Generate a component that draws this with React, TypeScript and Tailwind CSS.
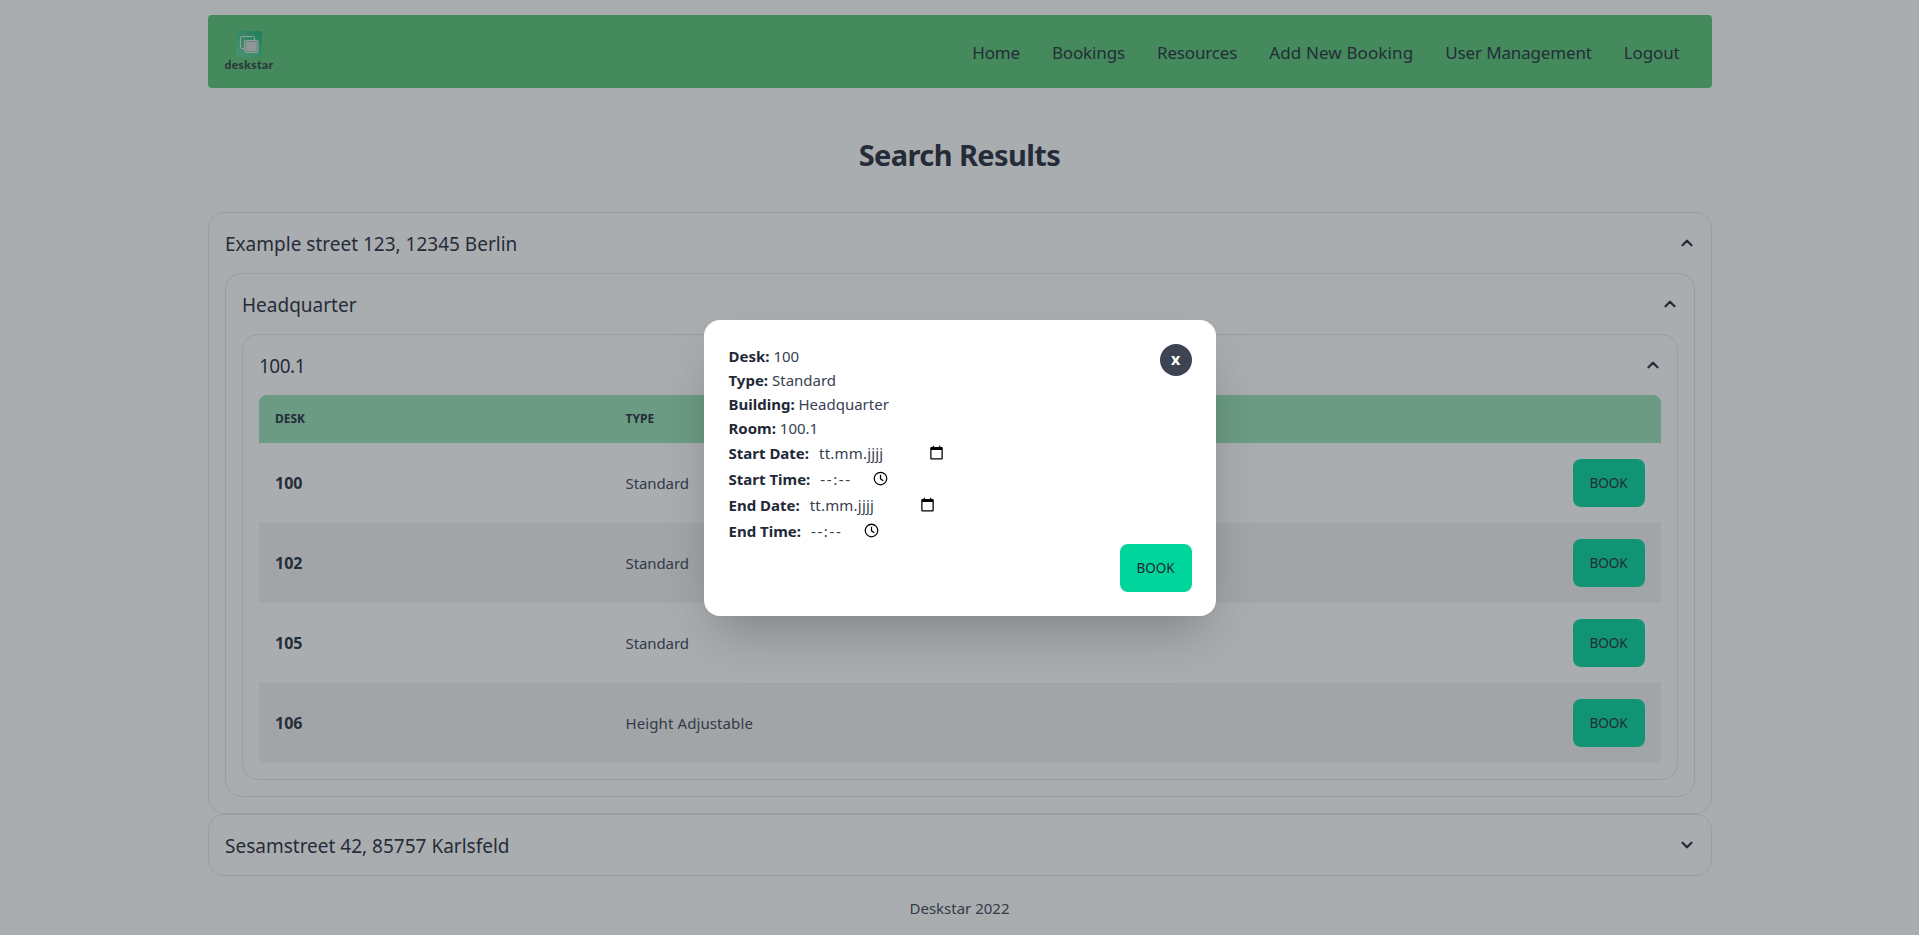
import { ChevronDown, ChevronUp } from "lucide-react";

const desks = [
  { id: "100", type: "Standard" },
  { id: "102", type: "Standard" },
  { id: "105", type: "Standard" },
  { id: "106", type: "Height Adjustable" },
];

const navItems = ["Home", "Bookings", "Resources", "Add New Booking", "User Management", "Logout"];

const CalendarIcon = () => (
  <svg viewBox="0 0 24 24" className="h-[15px] w-[15px] fill-black">
    <path d="M20 3h-2V1h-2v2H8V1H6v2H4c-1.1 0-2 .9-2 2v16c0 1.1.9 2 2 2h16c1.100 0 2-.9 2-2V5c0-1.100-.9-2-2-2zm0 18H4V8h16v13z" />
  </svg>
);

const ClockIcon = () => (
  <svg viewBox="0 0 24 24" className="h-[15px] w-[15px]" fill="none" stroke="black">
    <circle cx="12" cy="12" r="10" strokeWidth="2" />
    <path d="M12 6v6.500l4.500 3" strokeWidth="2" />
  </svg>
);

const Logo = () => (
  <div className="ml-[17px] flex flex-col items-center">
    <div className="flex h-[26px] w-[26px] items-center justify-center rounded-[3px] bg-gradient-to-tr from-[#5fd69a] to-[#12b070]">
      <svg viewBox="0 0 26 26" className="h-[26px] w-[26px]" fill="none" stroke="#d8e8e0" strokeWidth="1">
        <rect x="4.500" y="5.500" width="14" height="12" rx="1" />
        <rect x="8.500" y="9.500" width="13.500" height="12" rx="1" fill="#8fc4a6" />
        <rect x="10" y="11" width="10.500" height="9" fill="#d0dcd6" stroke="none" />
      </svg>
    </div>
    <span className="mt-[1px] font-['Lato'] text-[12px] leading-[14px] font-black tracking-[0.4px] text-[#2a3a38]">deskstar</span>
  </div>
);

const SectionHeader = ({ title, open, tight }: { title: string; open: boolean; tight?: boolean }) => (
  <div className={`flex h-[60px] items-center justify-between pr-[15px] pl-[16.5px] pb-[1px] text-[19px] text-[#1f2937] ${tight ? "tracking-[-0.5px]" : "tracking-normal"}`}>
    <span className="pt-[3px]">{title}</span>
    {open ? <ChevronUp size={18} strokeWidth={3} /> : <ChevronDown size={18} strokeWidth={3} />}
  </div>
);

const DeskTable = () => (
  <table className="w-full border-separate border-spacing-0 text-left">
    <thead>
      <tr className="h-[48px] bg-[#96e1b2] text-[12px] font-bold text-[#1f2937]">
        <th className="w-[367px] rounded-tl-lg pl-[16.5px] font-bold">DESK</th>
        <th className="font-bold">TYPE</th>
        <th className="rounded-tr-lg" />
      </tr>
    </thead>
    <tbody>
      {desks.map((desk, i) => {
        const bg = i % 2 === 1 ? "bg-[#f2f2f2]" : "bg-white";
        return (
          <tr key={desk.id} className="h-[80px] text-[#1f2937]">
            <td className={`${bg} pl-[16.5px] text-[16px] font-bold ${i === 3 ? "rounded-bl-lg" : ""}`}>{desk.id}</td>
            <td className={`${bg} text-[#374151] ${i === 3 ? "tracking-[0.1px]" : "tracking-[-0.1px]"}`}>{desk.type}</td>
            <td className={`${bg} pr-[16px] text-right ${i === 3 ? "rounded-br-lg" : ""}`}>
              <button className="h-[48px] w-[72px] rounded-lg bg-[#00d59b] text-[13.5px] text-[#1f2937]">BOOK</button>
            </td>
          </tr>
        );
      })}
    </tbody>
  </table>
);

const Field = ({ label, placeholder, kind, width }: { label: string; placeholder: string; kind: "date" | "time"; width: string }) => (
  <div className="flex h-[26px] items-center pl-[1px]">
    <b className="mr-[10px] pt-[1px] font-bold text-[#1f2937]">{label}</b>
    <span className={`${width} pt-[1px] text-[#374151] ${kind === "time" ? "tracking-[1.6px]" : "tracking-[0.2px]"}`}>{placeholder}</span>
    {kind === "date" ? <CalendarIcon /> : <ClockIcon />}
  </div>
);

export default function App() {
  return (
    <div className="relative min-h-[935px] bg-white font-['Noto_Sans',sans-serif] text-[15px] text-[#1f2937]">
      <div className="mx-auto w-[1504px] pt-[15px]">
        <nav className="flex h-[73px] items-center justify-between rounded bg-[#55c573]">
          <Logo />
          <ul className="flex gap-[32px] pt-[2px] pr-[32px] text-[17px] tracking-[-0.15px] text-[#1f2937]">
            {navItems.map((item) => (
              <li key={item} className={item === "Add New Booking" ? "tracking-[0.12px]" : ""}>{item}</li>
            ))}
          </ul>
        </nav>

        <h1 className="mt-[49px] mb-[39px] text-center text-[29px] leading-[36px] font-bold tracking-[-0.6px] text-[#1f2937]">
          Search Results
        </h1>

        <div className="rounded-2xl border border-[#e5e7eb]">
          <SectionHeader title="Example street 123, 12345 Berlin" open />
          <div className="px-[16px] pb-[16px]">
            <div className="rounded-2xl border border-[#e5e7eb]">
              <SectionHeader title="Headquarter" open />
              <div className="px-[16px] pb-[16px]">
                <div className="rounded-2xl border border-[#e5e7eb]">
                  <SectionHeader title="100.1" open tight />
                  <div className="px-[16px] pb-[16px]">
                    <DeskTable />
                  </div>
                </div>
              </div>
            </div>
          </div>
        </div>
        <div className="rounded-2xl border border-[#e5e7eb]">
          <SectionHeader title="Sesamstreet 42, 85757 Karlsfeld" open={false} />
        </div>

        <footer className="mt-[21px] text-center text-[15px] text-[#374151]">Deskstar 2022</footer>
      </div>

      {/* Modal */}
      <div className="absolute inset-0 flex items-center justify-center bg-[#2a3239]/40">
        <div className="w-[512px] rounded-2xl bg-white p-[24px] shadow-[0_25px_50px_-12px_rgba(0,0,0,0.25)]">
          <div className="relative">
            <button className="absolute top-0 right-0 flex h-[32px] w-[32px] items-center justify-center rounded-full bg-[#3d4451] pb-[2px] text-[16px] font-bold text-white">
              x
            </button>
            <div className="pl-[1px] leading-[24px] text-[#374151]">
              <p><b className="text-[#1f2937]">Desk:</b> 100</p>
              <p><b className="text-[#1f2937]">Type:</b> Standard</p>
              <p><b className="text-[#1f2937]">Building:</b> Headquarter</p>
              <p><b className="text-[#1f2937]">Room:</b> 100.1</p>
            </div>
            <Field label="Start Date:" placeholder="tt.mm.jjjj" kind="date" width="w-[110px]" />
            <Field label="Start Time:" placeholder="--:--" kind="time" width="w-[53px]" />
            <Field label="End Date:" placeholder="tt.mm.jjjj" kind="date" width="w-[110px]" />
            <Field label="End Time:" placeholder="--:--" kind="time" width="w-[53px]" />
            <div className="flex justify-end">
              <button className="h-[48px] w-[72px] rounded-lg bg-[#00d59b] pt-[1px] text-[13.5px] text-[#1f2937]">BOOK</button>
            </div>
          </div>
        </div>
      </div>
    </div>
  );
}
